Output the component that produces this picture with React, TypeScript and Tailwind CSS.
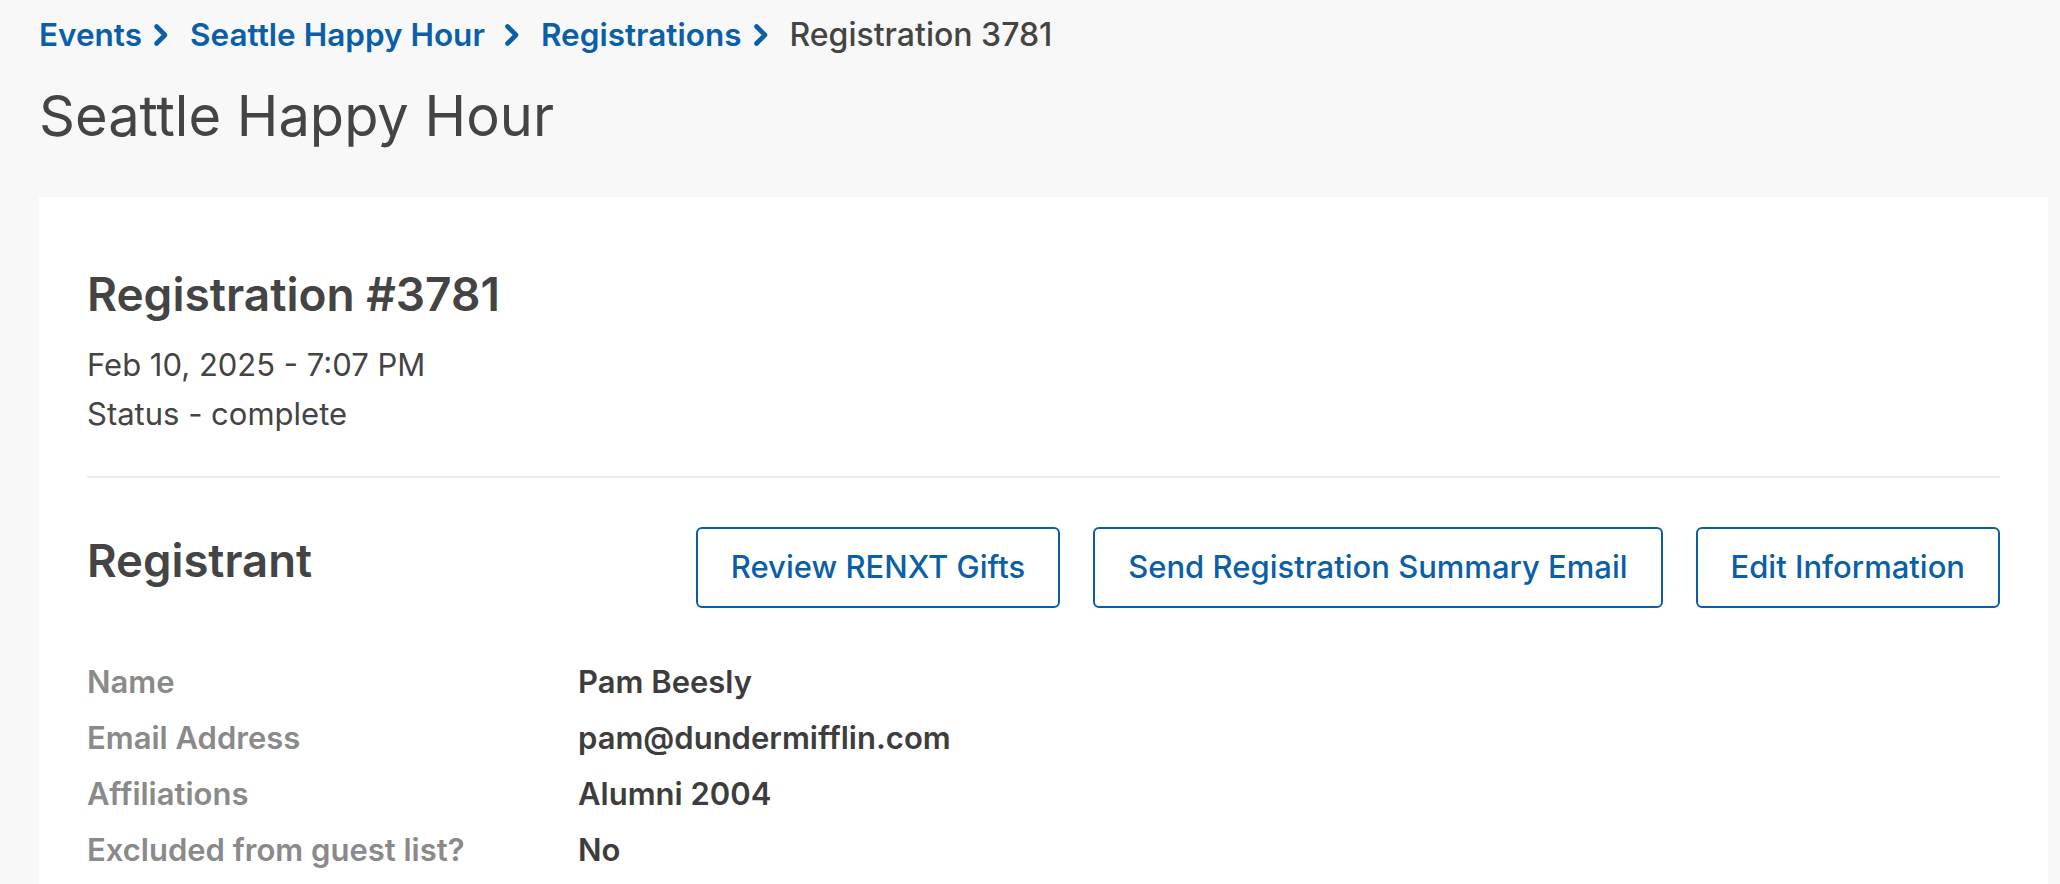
import React from "react";

const Chevron = ({ extra = false }: { extra?: boolean }) => (
  <svg
    width="16"
    height="24"
    viewBox="0 0 16 24"
    className={extra ? "ml-[19px] mr-[21px] shrink-0" : "ml-[11px] mr-[21px] shrink-0"}
    aria-hidden="true"
  >
    <path d="M3.5 3.5 L12 12 L3.5 20.5" fill="none" stroke="#0b5fa8" strokeWidth="4.6" strokeLinecap="round" strokeLinejoin="round" />
  </svg>
);

const rows: [string, string][] = [
  ["Name", "Pam Beesly"],
  ["Email Address", "pam@dundermifflin.com"],
  ["Affiliations", "Alumni 2004"],
  ["Excluded from guest list?", "No"],
];

export default function App() {
  return (
    <div
      className="min-h-screen bg-[#f8f8f8] pl-[39px] pr-[12px] pt-[15px]"
      style={{ fontFamily: "Inter, 'Noto Sans', sans-serif" }}
    >
      <nav className="flex items-center h-[40px] text-[31.5px] font-semibold leading-[40px]">
        <span className="text-[#0b5fa8]">Events</span>
        <Chevron />
        <span className="text-[#0b5fa8]">Seattle Happy Hour</span>
        <Chevron extra />
        <span className="text-[#0b5fa8]">Registrations</span>
        <Chevron />
        <span className="text-[#444444] font-medium text-[32px]">Registration 3781</span>
      </nav>
      <h1 className="mt-[29px] text-[56px] leading-[64px] font-normal text-[#444444]">Seattle Happy Hour</h1>

      <div className="mt-[49px] bg-white pl-[48px] pr-[48px] pt-[71px] pb-[60px]">
        <h2 className="text-[46px] leading-[52px] font-semibold text-[#444444]">Registration #3781</h2>
        <div className="mt-[20px] text-[31px] leading-[49px] text-[#444444]">
          <div>Feb 10, 2025 - 7:07 PM</div>
          <div>Status - complete</div>
        </div>
        <div className="mt-[38px] h-[2px] bg-[#ebebeb]" />

        <div className="mt-[49px] flex items-start justify-between">
          <h2 className="mt-[8px] text-[45.5px] leading-[52px] font-semibold text-[#444444]">Registrant</h2>
          <div className="flex gap-[33px]">
            {["Review RENXT Gifts", "Send Registration Summary Email", "Edit Information"].map((t) => (
              <button
                key={t}
                className="h-[81px] px-[33px] rounded-[6px] border-[2px] border-[#0b5fa8] bg-white text-[31px] font-medium text-[#0b5fa8]"
              >
                {t}
              </button>
            ))}
          </div>
        </div>

        <div className="mt-[46px]">
          {rows.map(([k, v]) => (
            <div key={k} className="grid grid-cols-[491px_1fr] h-[56px] items-center text-[31px] font-semibold">
              <div className="text-[#8a8a8a]">{k}</div>
              <div className="text-[#3d3d3d]">{v}</div>
            </div>
          ))}
        </div>
      </div>
    </div>
  );
}
